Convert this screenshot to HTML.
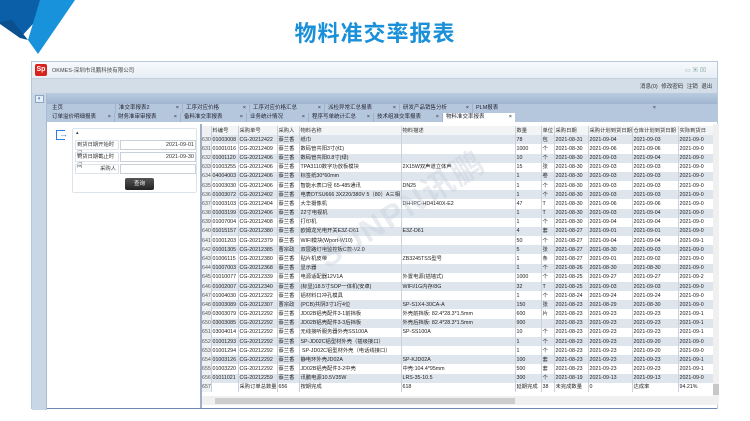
<!DOCTYPE html>
<html><head><meta charset="utf-8"><style>
*{margin:0;padding:0;box-sizing:border-box}
body{width:750px;height:421px;background:#fff;position:relative;overflow:hidden;font-family:"Liberation Sans","Noto Sans CJK SC",sans-serif;font-size:5.5px;color:#333}
.abs{position:absolute}
.title{left:0;width:750px;top:16px;text-align:center;font-size:22px;font-weight:bold;color:#1a90d8;letter-spacing:1px;font-family:"Noto Sans CJK SC",sans-serif}
.win{left:31px;top:61px;width:687px;height:348px;border:1px solid #b8c8da;background:#d7e1ec}
.tab{position:absolute;height:9px;line-height:9px;padding-left:3px;font-size:5.5px;color:#223;border-right:1px solid #9fb3cb}
.tab b{position:absolute;right:3px;font-weight:normal}
table{border-collapse:collapse;table-layout:fixed}
td{height:9.18px;line-height:8px;font-size:5.3px;white-space:nowrap;overflow:hidden;border-right:1px solid #c9d3de;padding-left:1px;color:#222}
tr:nth-child(even) td{background:#dfe5ec}
tr.h td{background:#f3f4f6;color:#333}
td.n{background:#eef0f3!important;color:#555;padding:0}
</style></head><body>
<svg class="abs" style="left:0;top:0" width="80" height="56"><polygon points="0,0 55,0 20,38 0,22" fill="#0b5fa8"/><polygon points="40,0 75,0 38,54 28,40" fill="#1893db"/><polygon points="28,40 12,20 0,22 0,24 20,38" fill="#0a4f8e"/></svg>
<div class="abs title">物料准交率报表</div>
<div class="abs win">
 <div class="abs" style="left:0;top:0;width:685px;height:16px;background:linear-gradient(#f8fafc,#e8eef5)"></div>
 <div class="abs" style="left:3px;top:2px;width:12px;height:12px;background:#d6231c;border-radius:2px;color:#fff;font-size:7px;font-weight:bold;line-height:12px;text-align:center">Sp</div>
 <div class="abs" style="left:20px;top:4px;font-size:5.5px;color:#444">OKMES-深圳市讯鹏科技有限公司</div>
 <div class="abs" style="left:653px;top:3px;font-size:6px;color:#8aa">▭ ▣ ⊠</div>
 <div class="abs" style="left:0;top:16px;width:685px;height:15px;background:#d3dde8;border-top:1px solid #c3d0de"></div>
 <div class="abs" style="left:608px;top:20px;font-size:5.5px;color:#333;word-spacing:2px">消息(0) 修改密码 注销 退出</div>
 <div class="abs" style="left:0;top:31px;width:15px;height:317px;background:#c9d6e5;border-right:1px solid #a9bbd1"></div>
 <div class="abs" style="left:3px;top:33px;width:9px;height:8px;background:#e6eef7;border:1px solid #8fa6c2;font-size:6px;line-height:7px;text-align:center;color:#2a6fc9">◐</div>
 <div class="abs" style="left:15px;top:31px;width:670px;height:11px;background:linear-gradient(#b8cbe0,#9fb5cf)"></div>
 <div class="abs" style="left:15px;top:42px;width:670px;height:18px;background:#b5c7dc"></div>
 <div class="tab" style="left:17px;top:42px;width:67px">主页</div>
 <div class="tab" style="left:84px;top:42px;width:67px">准交率报表2<b>×</b></div>
 <div class="tab" style="left:151px;top:42px;width:67px">工序对应价格<b>×</b></div>
 <div class="tab" style="left:218px;top:42px;width:75px">工序对应价格汇总<b>×</b></div>
 <div class="tab" style="left:293px;top:42px;width:75px">派检异常汇总报表<b>×</b></div>
 <div class="tab" style="left:368px;top:42px;width:73px">研发产品销售分析<b>×</b></div>
 <div class="tab" style="left:441px;top:42px;width:59px;border:none">PLM报表<b style="right:-124px">×</b></div>
 <div class="tab" style="left:17px;top:51px;width:66px">订单溢价明细报表<b>×</b></div>
 <div class="tab" style="left:83px;top:51px;width:66px">财务准审审报表<b>×</b></div>
 <div class="tab" style="left:149px;top:51px;width:66px">备料准交率报表<b>×</b></div>
 <div class="tab" style="left:215px;top:51px;width:62px">业务统计情况<b>×</b></div>
 <div class="tab" style="left:277px;top:51px;width:65px">程序写单统计汇总<b>×</b></div>
 <div class="tab" style="left:342px;top:51px;width:69px">技术组准交率报表<b>×</b></div>
 <div class="tab" style="left:411px;top:51px;width:72px;background:#fff;border:none;height:10px">物料准交率报表<b style="color:#000">×</b></div>
 <div class="abs" style="left:15px;top:60px;width:670px;height:286px;background:#fff"></div>
 <div class="abs" style="left:24px;top:68px;width:9px;height:10px;border:1.5px solid #2a7de1;border-right:none"></div>
 <div class="abs" style="left:27px;top:67px;font-size:9px;color:#2a7de1;font-weight:bold">→</div>
 <div class="abs" style="left:40px;top:66px;width:125px;height:65px;border:1px solid #dde3ea;border-radius:2px"></div>
 <div class="abs" style="left:44px;top:68px;font-size:5px">▴</div>
 <div class="abs" style="left:43px;top:78px;width:44px;height:10px;border:1px solid #dde3ea;font-size:5.3px;line-height:9px;padding-left:1px">到货日期开始时间</div>
 <div class="abs" style="left:88px;top:78px;width:76px;height:10px;border:1px solid #c9d0d8;font-size:5.5px;line-height:9px;text-align:right;padding-right:1px">2021-09-01</div>
 <div class="abs" style="left:43px;top:90px;width:44px;height:10px;border:1px solid #dde3ea;font-size:5.3px;line-height:9px;padding-left:1px">到货日期截止时间</div>
 <div class="abs" style="left:88px;top:90px;width:76px;height:10px;border:1px solid #c9d0d8;font-size:5.5px;line-height:9px;text-align:right;padding-right:1px">2021-09-30</div>
 <div class="abs" style="left:43px;top:102px;width:44px;height:10px;border:1px solid #dde3ea;font-size:5.3px;line-height:9px;text-align:right;padding-right:2px">采购人</div>
 <div class="abs" style="left:88px;top:102px;width:76px;height:10px;border:1px solid #c9d0d8"></div>
 <div class="abs" style="left:93px;top:116px;width:29px;height:12px;background:linear-gradient(#555,#222);border-radius:2px;color:#fff;font-size:5.5px;line-height:12px;text-align:center">查询</div>
 <div class="abs" style="left:168px;top:62px;width:2px;height:284px;background:#9eb0c6"></div>
 <div class="abs" style="left:170px;top:64px;width:511px;height:270px;overflow:hidden">
 <table style="width:511px">
 <colgroup><col style="width:9px"><col style="width:27px"><col style="width:39px"><col style="width:22px"><col style="width:102px"><col style="width:114px"><col style="width:26px"><col style="width:13px"><col style="width:34px"><col style="width:44px"><col style="width:46px"><col style="width:35px"></colgroup>
 <tr class="h"><td class="n"></td><td>料编号</td><td>采购单号</td><td>采购人</td><td>物料名称</td><td>物料描述</td><td>数量</td><td>单位</td><td>采购日期</td><td>采购计划到货日期</td><td>仓库计划到货日期</td><td>实际到货日</td></tr>
 <tr><td class="n">630</td><td>01003008</td><td>CG-20212422</td><td>蔡兰香</td><td>纸巾</td><td></td><td>78</td><td>包</td><td>2021-08-31</td><td>2021-09-04</td><td>2021-09-03</td><td>2021-09-0</td></tr>
 <tr><td class="n">631</td><td>01001016</td><td>CG-20212409</td><td>蔡兰香</td><td>数码管共阳3寸(红)</td><td></td><td>1000</td><td>个</td><td>2021-08-30</td><td>2021-09-06</td><td>2021-09-06</td><td>2021-09-0</td></tr>
 <tr><td class="n">632</td><td>01001120</td><td>CG-20212406</td><td>蔡兰香</td><td>数码管共阳0.8寸(绿)</td><td></td><td>10</td><td>个</td><td>2021-08-30</td><td>2021-09-03</td><td>2021-09-04</td><td>2021-09-0</td></tr>
 <tr><td class="n">633</td><td>01003255</td><td>CG-20212406</td><td>蔡兰香</td><td>TPA3110数字功放板模块</td><td>2X15W双声道立体声</td><td>15</td><td>张</td><td>2021-08-30</td><td>2021-09-03</td><td>2021-09-03</td><td>2021-09-0</td></tr>
 <tr><td class="n">634</td><td>04004003</td><td>CG-20212406</td><td>蔡兰香</td><td>标签纸30*60mm</td><td></td><td>1</td><td>卷</td><td>2021-08-30</td><td>2021-09-03</td><td>2021-09-03</td><td>2021-09-0</td></tr>
 <tr><td class="n">635</td><td>01003030</td><td>CG-20212406</td><td>蔡兰香</td><td>智能水表口径 65-485通讯</td><td>DN25</td><td>1</td><td>个</td><td>2021-08-30</td><td>2021-09-03</td><td>2021-09-03</td><td>2021-09-0</td></tr>
 <tr><td class="n">636</td><td>01003072</td><td>CG-20212402</td><td>蔡兰香</td><td>电表DTSU666 3X220/380V 5（80）A三相</td><td></td><td>1</td><td>个</td><td>2021-08-30</td><td>2021-09-03</td><td>2021-09-03</td><td>2021-09-0</td></tr>
 <tr><td class="n">637</td><td>01003103</td><td>CG-20212404</td><td>蔡兰香</td><td>大华摄像机</td><td>DH-IPC-HD4140X-E2</td><td>47</td><td>T</td><td>2021-08-30</td><td>2021-09-06</td><td>2021-09-06</td><td>2021-09-0</td></tr>
 <tr><td class="n">638</td><td>01003199</td><td>CG-20212406</td><td>蔡兰香</td><td>22寸电视机</td><td></td><td>1</td><td>T</td><td>2021-08-30</td><td>2021-09-03</td><td>2021-09-04</td><td>2021-09-0</td></tr>
 <tr><td class="n">639</td><td>01007004</td><td>CG-20212408</td><td>蔡兰香</td><td>打印机</td><td></td><td>1</td><td>个</td><td>2021-08-30</td><td>2021-09-04</td><td>2021-09-04</td><td>2021-09-0</td></tr>
 <tr><td class="n">640</td><td>01015157</td><td>CG-20212380</td><td>蔡兰香</td><td>欧姆龙光电开关E3Z-D61</td><td>E3Z-D61</td><td>4</td><td>套</td><td>2021-08-27</td><td>2021-09-01</td><td>2021-09-01</td><td>2021-09-0</td></tr>
 <tr><td class="n">641</td><td>01001203</td><td>CG-20212379</td><td>蔡兰香</td><td>WIFI模块(Wport-W10)</td><td></td><td>50</td><td>个</td><td>2021-08-27</td><td>2021-09-04</td><td>2021-09-04</td><td>2021-09-1</td></tr>
 <tr><td class="n">642</td><td>01001305</td><td>CG-20212385</td><td>曹宗政</td><td>双层路灯电监控板C款-V2.0</td><td></td><td>5</td><td>张</td><td>2021-08-27</td><td>2021-08-30</td><td>2021-09-03</td><td>2021-09-0</td></tr>
 <tr><td class="n">643</td><td>01006115</td><td>CG-20212380</td><td>蔡兰香</td><td>贴片机皮带</td><td>ZB3245TSS型号</td><td>1</td><td>条</td><td>2021-08-27</td><td>2021-09-01</td><td>2021-09-02</td><td>2021-09-0</td></tr>
 <tr><td class="n">644</td><td>01007003</td><td>CG-20212368</td><td>蔡兰香</td><td>显示器</td><td></td><td>1</td><td>个</td><td>2021-08-26</td><td>2021-08-30</td><td>2021-08-30</td><td>2021-09-0</td></tr>
 <tr><td class="n">645</td><td>01010077</td><td>CG-20212339</td><td>蔡兰香</td><td>电源适配器12V1A</td><td>外置电源(插墙式)</td><td>1000</td><td>个</td><td>2021-08-25</td><td>2021-09-27</td><td>2021-09-27</td><td>2021-09-2</td></tr>
 <tr><td class="n">646</td><td>01002007</td><td>CG-20212340</td><td>蔡兰香</td><td>(标显)18.5寸SOP一体机(安卓)</td><td>WIFI/1G内存/8G</td><td>32</td><td>T</td><td>2021-08-25</td><td>2021-09-03</td><td>2021-09-03</td><td>2021-09-0</td></tr>
 <tr><td class="n">647</td><td>01004030</td><td>CG-20212322</td><td>蔡兰香</td><td>铝材料口冲孔模具</td><td></td><td>1</td><td>个</td><td>2021-08-24</td><td>2021-09-24</td><td>2021-09-24</td><td>2021-09-0</td></tr>
 <tr><td class="n">648</td><td>01003089</td><td>CG-20212307</td><td>曹宗政</td><td>(PCB)共阴3寸1行4位</td><td>SP-S1X4-30CA-A</td><td>150</td><td>张</td><td>2021-08-23</td><td>2021-08-29</td><td>2021-08-30</td><td>2021-09-0</td></tr>
 <tr><td class="n">649</td><td>03003079</td><td>CG-20212292</td><td>蔡兰香</td><td>JD02B铝壳配件3-1前挡板</td><td>外壳前挡板: 82.4*28.3*1.5mm</td><td>600</td><td>片</td><td>2021-08-23</td><td>2021-09-23</td><td>2021-09-23</td><td>2021-09-1</td></tr>
 <tr><td class="n">650</td><td>03003085</td><td>CG-20212292</td><td>蔡兰香</td><td>JD02B铝壳配件3-3后挡板</td><td>外壳后挡板: 82.4*28.3*1.5mm</td><td>900</td><td></td><td>2021-08-23</td><td>2021-09-23</td><td>2021-09-23</td><td>2021-09-1</td></tr>
 <tr><td class="n">651</td><td>03004014</td><td>CG-20212292</td><td>蔡兰香</td><td>无线接听服务器外壳SS100A</td><td>SP-SS100A</td><td>10</td><td>个</td><td>2021-08-23</td><td>2021-09-23</td><td>2021-09-23</td><td>2021-09-1</td></tr>
 <tr><td class="n">652</td><td>01001293</td><td>CG-20212292</td><td>蔡兰香</td><td>SP-JD02C铝型材外壳（插级接口）</td><td></td><td>1</td><td>个</td><td>2021-08-23</td><td>2021-09-23</td><td>2021-09-20</td><td>2021-09-0</td></tr>
 <tr><td class="n">653</td><td>01001294</td><td>CG-20212292</td><td>蔡兰香</td><td>&nbsp;SP-JD02C铝型材外壳（电话线接口）</td><td></td><td>1</td><td>个</td><td>2021-08-23</td><td>2021-09-23</td><td>2021-09-20</td><td>2021-09-0</td></tr>
 <tr><td class="n">654</td><td>01003126</td><td>CG-20212292</td><td>蔡兰香</td><td>静电环外壳JD02A</td><td>SP-KJD02A</td><td>100</td><td>套</td><td>2021-08-23</td><td>2021-09-23</td><td>2021-09-23</td><td>2021-09-1</td></tr>
 <tr><td class="n">655</td><td>01003220</td><td>CG-20212292</td><td>蔡兰香</td><td>JD02B铝壳配件3-2中壳</td><td>中壳:104.4*95mm</td><td>500</td><td>套</td><td>2021-08-23</td><td>2021-09-23</td><td>2021-09-23</td><td>2021-09-1</td></tr>
 <tr><td class="n">656</td><td>01011021</td><td>CG-20212259</td><td>蔡兰香</td><td>讯鹏电源10.5V35W</td><td>LRS-35-10.5</td><td>300</td><td>个</td><td>2021-08-19</td><td>2021-09-13</td><td>2021-09-13</td><td>2021-09-0</td></tr>
 <tr><td class="n">657</td><td></td><td>采购订单总数量</td><td>656</td><td>按期完成</td><td>618</td><td>延期完成</td><td>38</td><td>未完成数量</td><td>0</td><td>达成率</td><td>94.21%</td></tr>
 </table>
 </div>
 <div class="abs" style="left:681px;top:62px;width:6px;height:272px;background:#f0f0f0"></div>
 <div class="abs" style="left:681px;top:322px;width:6px;height:11px;background:#c8c8c8"></div>
 <div class="abs" style="left:170px;top:334px;width:517px;height:9px;background:#f0f0f0"></div>
 <div class="abs" style="left:183px;top:336px;width:300px;height:6px;background:#cdcdcd"></div>
 <div class="abs" style="left:15px;top:346px;width:670px;height:1px;background:#6b8ab3"></div>
</div>
<div class="abs" style="left:320px;top:235px;font-size:32px;color:rgba(190,200,215,0.35);transform:rotate(-32deg);transform-origin:left center;font-weight:bold;letter-spacing:2px">SUNPN讯鹏</div>
</body></html>
